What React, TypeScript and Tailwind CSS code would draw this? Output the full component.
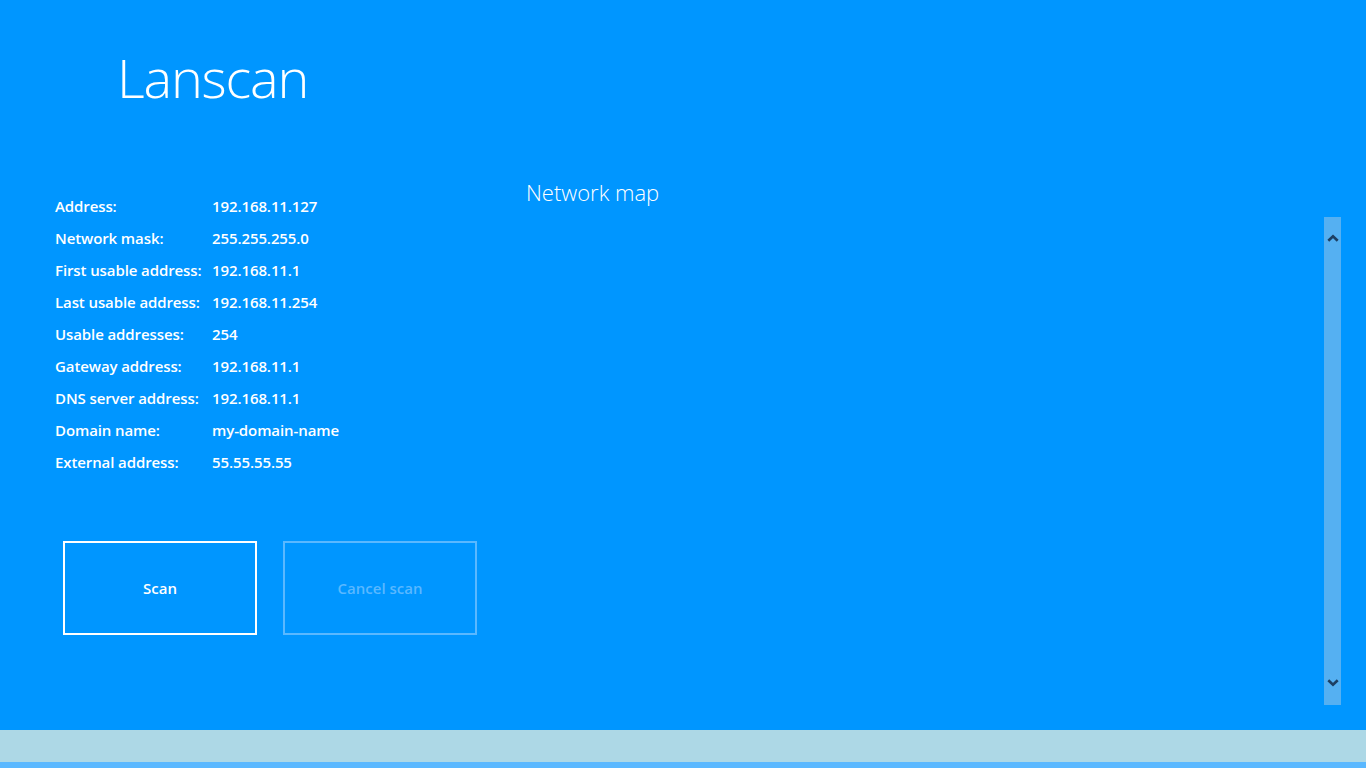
import React from "react";

const INFO = [
  ["Address:", "192.168.11.127"],
  ["Network mask:", "255.255.255.0"],
  ["First usable address:", "192.168.11.1"],
  ["Last usable address:", "192.168.11.254"],
  ["Usable addresses:", "254"],
  ["Gateway address:", "192.168.11.1"],
  ["DNS server address:", "192.168.11.1"],
  ["Domain name:", "my-domain-name"],
  ["External address:", "55.55.55.55"],
];

const font = "font-['Open_Sans','Noto_Sans',sans-serif]";

export default function App() {
  return (
    <div className={`flex h-[768px] w-full flex-col overflow-hidden bg-[#0096ff] text-white ${font}`}>
      {/* header */}
      <div className="h-[160px] shrink-0 pl-[117px] pt-[45px]">
        <h1 className="text-[54px] font-light leading-[64px] tracking-[-1.2px]">Lanscan</h1>
      </div>

      <div className="flex min-h-0 flex-1">
        {/* network info */}
        <div className="flex w-[526px] shrink-0 flex-col pl-[55px] pt-[30px]">
          <div className="flex flex-col">
            {INFO.map(([label, value]) => (
              <div key={label} className="flex h-8 items-center text-[15px] font-semibold tracking-[-0.1px]">
                <span className="w-[157px]">{label}</span>
                <span>{value}</span>
              </div>
            ))}
          </div>
          <div className="mt-[63px] flex gap-[26px] pl-2">
            <button className="flex h-[94px] w-[194px] items-center justify-center border-2 border-white text-[15px] font-semibold text-white">
              Scan
            </button>
            <button className="flex h-[94px] w-[194px] items-center justify-center border-2 border-[#5ab8ff] text-[15px] font-semibold text-[#5ab8ff]">
              Cancel scan
            </button>
          </div>
        </div>

        {/* network map */}
        <div className="flex-1 pt-[17px]">
          <h2 className="text-[22px] font-light leading-[30px]">Network map</h2>
        </div>

        {/* scrollbar */}
        <div className="mb-[25px] mr-[25px] mt-[57px] flex w-[17px] shrink-0 flex-col items-center justify-between bg-[#55b0f2] pb-[18px] pt-[17px]">
          <svg width="12" height="8" viewBox="0 0 12 8">
            <path d="M1.3 6.8 L6 2.2 L10.7 6.8" fill="none" stroke="#1d3f63" strokeWidth="2.6" />
          </svg>
          <svg width="12" height="8" viewBox="0 0 12 8">
            <path d="M1.3 1.2 L6 5.8 L10.7 1.2" fill="none" stroke="#1d3f63" strokeWidth="2.6" />
          </svg>
        </div>
      </div>

      {/* bottom bars */}
      <div className="h-8 shrink-0 bg-[#add8e6]" />
      <div className="h-[6px] shrink-0 bg-[#5ab8ff]" />
    </div>
  );
}
